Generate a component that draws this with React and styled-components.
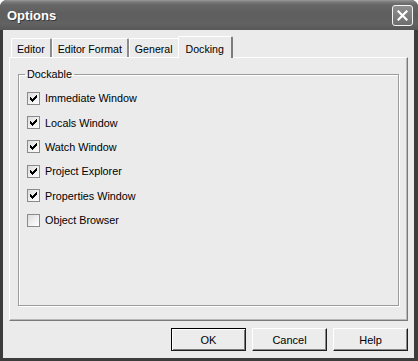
import React, { useState } from 'react'
import styled, { createGlobalStyle } from 'styled-components'

const GlobalStyle = createGlobalStyle`
  html, body {
    margin: 0;
    padding: 0;
    background: #ffffff;
  }
  body {
    font-family: "Liberation Sans", Arial, sans-serif;
    font-size: 11px;
    color: #000;
  }
`

const Window = styled.div`
  width: 418px;
  height: 361px;
  display: flex;
  flex-direction: column;
  box-sizing: border-box;
  background: #3c3c3c;
  border-radius: 7px 7px 0 0;
  overflow: hidden;
`

const TitleBar = styled.div`
  height: 30px;
  flex: none;
  display: flex;
  align-items: center;
  justify-content: space-between;
  padding: 0 5px 0 7px;
  background: linear-gradient(to bottom, #9a9a9a 0px, #7a7a7a 2px, #666666 5px, #5e5e5e 14px, #626262 24px, #575757 30px);
`

const Title = styled.span`
  font-family: "Liberation Sans", Arial, sans-serif;
  font-weight: bold;
  font-size: 13px;
  color: #ffffff;
  text-shadow: 1px 1px 0 #3a3a3a;
`

const CloseButton = styled.div`
  width: 21px;
  height: 21px;
  box-sizing: border-box;
  border: 1px solid #f4f4f4;
  border-radius: 3px;
  background: linear-gradient(to bottom, #8e8e8e, #6e6e6e);
  display: flex;
  align-items: center;
  justify-content: center;
  margin-top: 1px;
`

const Frame = styled.div`
  flex: 1;
  display: flex;
  flex-direction: column;
  margin: 0 4px 3px 3px;
  background: #ebebeb;
  padding: 6px 6px 7px 6px;
`

const TabStrip = styled.div`
  display: flex;
  align-items: flex-end;
  height: 21px;
  padding-left: 2px;
  position: relative;
  z-index: 1;
`

const Tab = styled.div`
  box-sizing: border-box;
  height: ${p => (p.active ? '22px' : '19px')};
  margin: ${p => (p.active ? '0 -2px -1px -2px' : '0')};
  padding: ${p => (p.active ? '2px 7px 0 7px' : '1px 5px 0 5px')};
  display: flex;
  align-items: center;
  background: #ebebeb;
  border-top: 1px solid #ffffff;
  border-left: 1px solid #ffffff;
  border-right: 2px solid ${p => (p.active ? '#7c7c7c' : '#8c8c8c')};
  border-radius: 2px 2px 0 0;
  font-size: 10.6px;
  white-space: nowrap;
  position: relative;
  z-index: ${p => (p.active ? 2 : 1)};
`

const Panel = styled.div`
  flex: 1;
  box-sizing: border-box;
  border-top: 1px solid #ffffff;
  border-left: 1px solid #ffffff;
  border-right: 1px solid #7a7a7a;
  border-bottom: 1px solid #7a7a7a;
  box-shadow: inset -1px -1px 0 #b8b8b8;
  padding: 10px 8px 14px 8px;
  display: flex;
`

const Group = styled.fieldset`
  flex: 1;
  margin: 0;
  padding: 5px 0 0 8px;
  border: 1px solid #9c9c9c;
  box-shadow: inset 1px 1px 0 #ffffff, 1px 1px 0 #ffffff;
  min-width: 0;
`

const Legend = styled.legend`
  padding: 0 2px;
  margin-left: -2px;
  line-height: 13px;
  font-size: 10.8px;
`

const Option = styled.label`
  display: flex;
  align-items: center;
  gap: 5px;
  height: 24.4px;
  font-size: 10.8px;
  cursor: default;
`

const Box = styled.span`
  width: 13px;
  height: 13px;
  box-sizing: border-box;
  border: 1px solid #8a8a8a;
  background: linear-gradient(135deg, #dcdcdc 0%, #f2f2f2 60%, #ffffff 100%);
  display: flex;
  align-items: center;
  justify-content: center;
  flex: none;
`

const ButtonRow = styled.div`
  display: flex;
  justify-content: flex-end;
  gap: 6px;
  margin-top: 7px;
`

const Button = styled.button`
  width: 75px;
  height: 23px;
  box-sizing: border-box;
  font-family: "Liberation Sans", Arial, sans-serif;
  font-size: 11px;
  color: #000;
  background: #ececec;
  border: 1px solid ${p => (p.primary ? '#000000' : '#ffffff')};
  border-right-color: #1e1e1e;
  border-bottom-color: #1e1e1e;
  box-shadow: ${p => (p.primary
    ? 'inset 1px 1px 0 #ffffff, inset -1px -1px 0 #7a7a7a'
    : 'inset -1px -1px 0 #8a8a8a')};
  padding: 0;
  margin: 0;
`

// classic 7x7 pixel check mark, one column per rect
const checkColumns = [2, 3, 4, 3, 2, 1, 0]

const Check = () => (
  <svg width="7" height="7" viewBox="0 0 7 7" shapeRendering="crispEdges">
    {checkColumns.map((y, x) => (
      <rect key={x} x={x} y={y} width="1" height="3" fill="#000" />
    ))}
  </svg>
)

const CloseIcon = () => (
  <svg width="11" height="11" viewBox="0 0 11 11">
    <path d="M1.5 1.5 L9.5 9.5 M9.5 1.5 L1.5 9.5" stroke="#fff" strokeWidth="2.2" strokeLinecap="square" />
  </svg>
)

const tabs = ['Editor', 'Editor Format', 'General', 'Docking']

const initialOptions = [
  { id: 'immediate', title: 'Immediate Window', checked: true },
  { id: 'locals', title: 'Locals Window', checked: true },
  { id: 'watch', title: 'Watch Window', checked: true },
  { id: 'project', title: 'Project Explorer', checked: true },
  { id: 'properties', title: 'Properties Window', checked: true },
  { id: 'object', title: 'Object Browser', checked: false },
]

export default function App() {
  const [activeTab, setActiveTab] = useState('Docking')
  const [options, setOptions] = useState(initialOptions)

  function toggle(id) {
    setOptions(opts => opts.map(o => (o.id === id ? { ...o, checked: !o.checked } : o)))
  }

  return (
    <>
      <GlobalStyle />
      <Window>
        <TitleBar>
          <Title>Options</Title>
          <CloseButton><CloseIcon /></CloseButton>
        </TitleBar>
        <Frame>
          <TabStrip>
            {tabs.map(t => (
              <Tab key={t} active={t === activeTab} onClick={() => setActiveTab(t)}>{t}</Tab>
            ))}
          </TabStrip>
          <Panel>
            <Group>
              <Legend>Dockable</Legend>
              {options.map(o => (
                <Option key={o.id} onClick={() => toggle(o.id)}>
                  <Box>{o.checked && <Check />}</Box>
                  {o.title}
                </Option>
              ))}
            </Group>
          </Panel>
          <ButtonRow>
            <Button primary>OK</Button>
            <Button>Cancel</Button>
            <Button>Help</Button>
          </ButtonRow>
        </Frame>
      </Window>
    </>
  )
}
